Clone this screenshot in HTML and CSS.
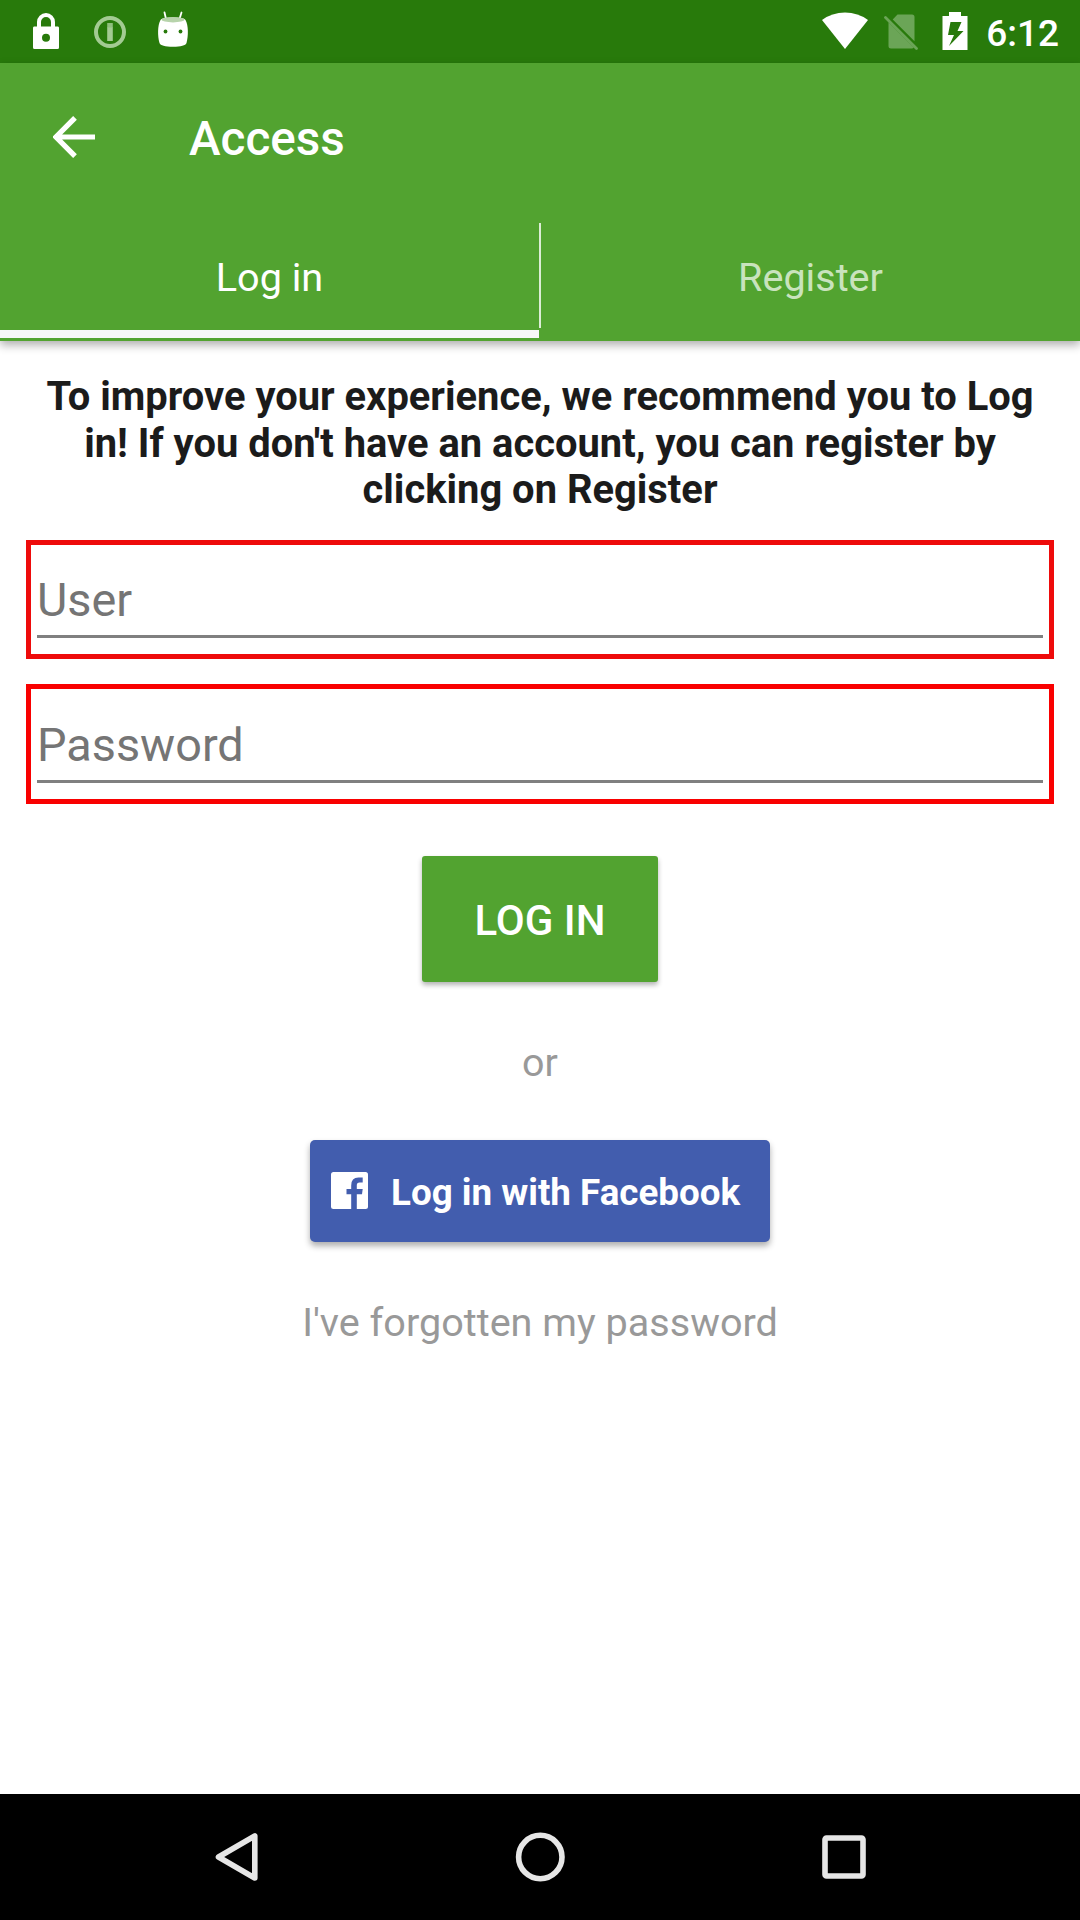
FILE: index.html
```html
<!DOCTYPE html>
<html lang="en">
<head>
<meta charset="utf-8">
<title>Access</title>
<link rel="stylesheet" href="styles.css">
</head>
<body>
<div class="screen">
  <div class="status-bar">
    <div class="status-left">
      <svg class="ic-lock" width="26" height="36" viewBox="0 0 26 36"><path fill="#fff" fill-rule="evenodd" d="M1 13.500H4V9A9 9 0 0 1 22 9V13.500H25Q26 13.500 26 15V34.500Q26 36 24.500 36H1.500Q0 36 0 34.500V15Q0 13.500 1 13.500ZM8 13.500H18V9A5 5 0 0 0 8 9ZM13 20.700A4 4 0 1 0 13 28.700A4 4 0 1 0 13 20.700Z"/></svg>
      <svg class="ic-info" width="32" height="32" viewBox="0 0 32 32"><circle cx="16" cy="16" r="14" fill="none" stroke="#a3cb93" stroke-width="4"/><path fill="#8fbf7d" d="M13.200 7h5.600v5h-5.600z"/><path fill="#a3cb93" d="M13.200 11.500h5.600v13.500h-5.600z"/></svg>
      <svg class="ic-bot" width="32" height="36" viewBox="0 0 32 36"><path d="M7.500 1.500L9 8M24.500 1.500L22.500 8" stroke="#fff" stroke-width="1.800" stroke-linecap="round"/><path fill="#fff" d="M3.500 9Q4 6.500 16 6.500T28.500 9C31.500 14 31.500 25 29.500 32C28.500 34.500 24 35.700 16 35.700S3.500 34.500 2.500 32C.5 25 .5 14 3.500 9Z"/><ellipse cx="16" cy="8.700" rx="11.500" ry="2.700" fill="#b7d3ab"/><circle cx="8.500" cy="20.500" r="1.900" fill="#287a0b"/><circle cx="23.500" cy="20.500" r="1.900" fill="#287a0b"/></svg>
    </div>
    <div class="status-right">
      <svg class="ic-wifi" width="48" height="38" viewBox="0 0 48 38"><path fill="#fff" d="M1 8Q11 .5 24 .5T47 8L24 37Z"/></svg>
      <svg class="ic-sim" width="34" height="38" viewBox="0 0 34 38"><path fill="#6ba557" d="M13.500 1.500H28Q30.500 1.500 30.500 4V28.200L8.700 6.400ZM4.500 9.200L29.800 34.500Q29 35.500 28 35.500H7Q4.500 35.500 4.500 33Z"/><path d="M1.500 4.500L32.500 35.500" stroke="#6ba557" stroke-width="2.800" stroke-linecap="round"/></svg>
      <svg class="ic-battery" width="26" height="38" viewBox="0 0 26 38"><path fill="#fff" fill-rule="evenodd" d="M7 0H19V4H25.500V38H.5V4H7ZM8.500 10L6 23H12L7 34L21.500 19H15.500L19.500 10Z"/></svg>
      <span class="clock">6:12</span>
    </div>
  </div>

  <header class="app-bar">
    <div class="toolbar">
      <svg class="back" width="42" height="42" viewBox="0 0 42 42"><path d="M42 21H4M22 1.800L3 21L22 40.200" fill="none" stroke="#fff" stroke-width="5.200"/></svg>
      <h1 class="title">Access</h1>
    </div>
    <nav class="tabs">
      <a class="tab tab-active">Log in</a>
      <span class="tab-divider"></span>
      <a class="tab">Register</a>
    </nav>
  </header>

  <main class="content">
    <p class="intro">To improve your experience, we recommend you to Log<br>in! If you don't have an account, you can register by<br>clicking on Register</p>
    <div class="field field-user"><div class="input">User</div></div>
    <div class="field field-pass"><div class="input">Password</div></div>
    <div class="login-btn"><span>LOG IN</span></div>
    <p class="or">or</p>
    <div class="fb-btn">
      <svg width="37" height="37" viewBox="0 0 37 37"><rect width="37" height="37" rx="2.500" fill="#fff"/><path fill="#425dae" d="M20.200 37V22.300H15.500V17H20.200V13.500Q20.200 5.600 27.500 5.600H31.700V10.600H28.500Q25.800 10.600 25.800 13.200V17H31.700L31 22.300H25.800V37Z"/></svg>
      <span>Log in with Facebook</span>
    </div>
    <p class="forgot">I've forgotten my password</p>
  </main>

  <div class="nav-bar">
    <svg width="50" height="50" viewBox="0 0 50 50"><path d="M7.500 25L43.800 4V46Z" fill="none" stroke="#e6e6e6" stroke-width="5.600" stroke-linejoin="round"/></svg>
    <svg width="50" height="50" viewBox="0 0 50 50"><circle cx="25.300" cy="25" r="21.700" fill="none" stroke="#e6e6e6" stroke-width="5.600"/></svg>
    <svg width="50" height="50" viewBox="0 0 50 50"><rect x="6" y="6" width="38" height="38" rx="1.500" fill="none" stroke="#e6e6e6" stroke-width="5.600"/></svg>
  </div>
</div>
</body>
</html>
```
FILE: styles.css
```css
* { box-sizing: border-box; margin: 0; padding: 0; }
body { width: 1080px; height: 1920px; background: #fff; font-family: Roboto, sans-serif; overflow: hidden; }
svg { display: block; flex: none; }
.screen { display: flex; flex-direction: column; width: 1080px; height: 1920px; background: #fff; }

.status-bar { height: 63px; flex: none; background: #287a0b; display: flex; justify-content: space-between; color: #fff; }
.status-left { display: flex; padding-left: 33px; }
.ic-lock { margin-top: 13px; }
.ic-info { margin: 15.500px 0 0 35px; }
.ic-bot { margin: 10.500px 0 0 31px; }
.status-right { display: flex; padding-right: 21px; }
.ic-wifi { margin-top: 12px; }
.ic-sim { margin: 13px 0 0 15px; }
.ic-battery { margin: 12px 0 0 24px; }
.clock { margin-left: 18px; font-size: 37px; font-weight: 500; line-height: 67px; white-space: nowrap; }

.app-bar { height: 278px; flex: none; background: #52a330; color: #fff; box-shadow: 0 4px 9px rgba(0, 0, 0, .32); }
.toolbar { height: 147px; display: flex; align-items: center; padding-left: 53px; }
.title { margin-left: 94px; padding-top: 5px; font-size: 47.600px; font-weight: 500; line-height: 60px; }
.tabs { height: 128px; display: flex; padding-top: 13px; }
.tab { flex: 1; display: flex; align-items: center; justify-content: center; height: 115px; padding-top: 1px; font-size: 39.600px; color: #c9e3bd; border-bottom: 8px solid transparent; }
.tab-active { color: #fff; border-bottom-color: #f7f7f7; }
.tab-divider { width: 2px; height: 105px; background: #dcedd5; }

.content { flex: 1; display: flex; flex-direction: column; align-items: center; padding: 33px 26px 0; }
.intro { font-size: 39.900px; font-weight: 700; line-height: 46.500px; color: #1b1b1b; text-align: center; white-space: nowrap; }
.field { width: 1028px; height: 119px; border: 5px solid #ee0b0b; padding: 0 6px; }
.field-user { margin-top: 26.500px; }
.field-pass { margin-top: 25px; height: 120px; border-color: #f90000; }
.input { height: 93px; border-bottom: 3px solid #808080; padding: 27px 0 0; font-size: 46.800px; line-height: 56px; color: #757575; }
.field-pass .input { height: 94px; padding-top: 28px; }
.login-btn { margin-top: 52px; width: 236px; height: 126px; border-radius: 3px; background: #52a330; color: #fff; font-size: 42px; font-weight: 500; line-height: 130px; text-align: center; box-shadow: 0 3px 5px rgba(0, 0, 0, .3); }
.or { margin-top: 57px; font-size: 39.400px; line-height: 48px; color: #999; }
.fb-btn { margin-top: 53px; width: 460px; height: 102px; border-radius: 5px; background: #425dae; color: #fff; display: flex; align-items: center; padding-left: 21px; font-size: 36.750px; font-weight: 700; box-shadow: 0 4px 6px rgba(0, 0, 0, .32); white-space: nowrap; }
.fb-btn svg { margin-bottom: 1px; }
.fb-btn span { margin: 3px 0 0 23px; }
.forgot { margin-top: 56px; font-size: 39.600px; line-height: 50px; color: #999; }

.nav-bar { height: 126px; flex: none; background: #000; display: flex; justify-content: center; align-items: center; gap: 254px; }
```
